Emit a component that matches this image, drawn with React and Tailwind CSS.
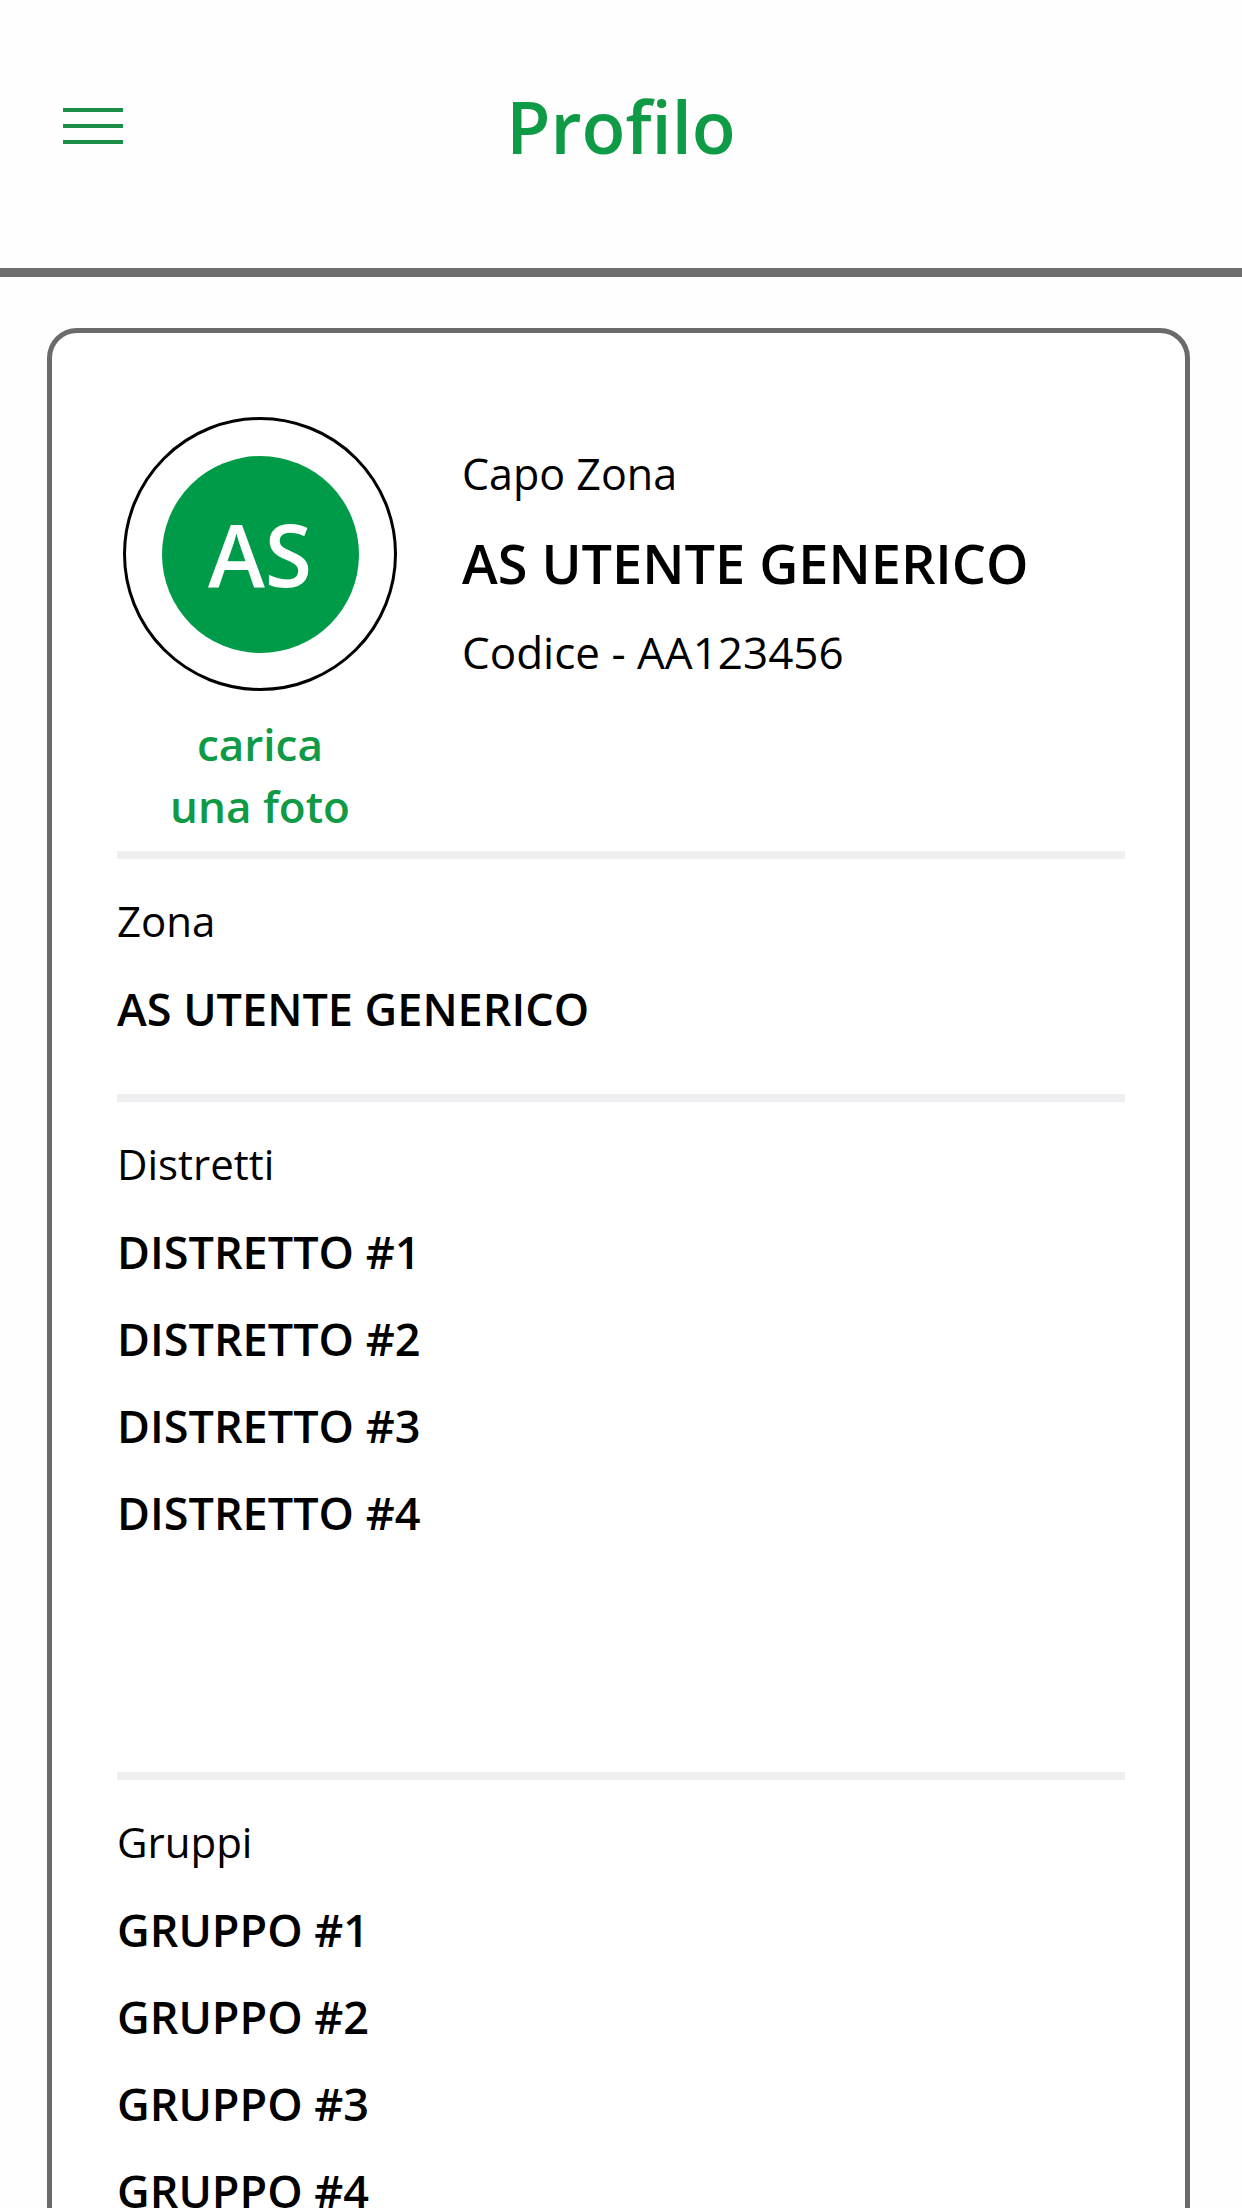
import React from 'react';

const zona = ['AS UTENTE GENERICO'];
const distretti = ['DISTRETTO #1', 'DISTRETTO #2', 'DISTRETTO #3', 'DISTRETTO #4'];
const gruppi = ['GRUPPO #1', 'GRUPPO #2', 'GRUPPO #3', 'GRUPPO #4'];

const Section = ({ label, items, bottom }) => (
  <>
    <div className="h-[8px] bg-[#efeff1]" />
    <div className={`pt-[18px] ${bottom}`}>
      <p className="text-[42px] leading-[88px] text-black">{label}</p>
      {items.map((item, index) => (
        <p key={index} className="text-[45px] leading-[87px] font-semibold text-black">
          {item}
        </p>
      ))}
    </div>
  </>
);

const App = () => {
  return (
    <div className="min-h-screen bg-[#fefefe] font-['Open_Sans',sans-serif] overflow-hidden">
      {/* Header */}
      <header className="h-[268px] pt-[86px] px-[63px]">
        <div className="grid grid-cols-[1fr_auto_1fr] items-center h-[80px]">
          <div className="flex flex-col gap-[12px] w-[60px]">
            <span className="block h-[4px] bg-[#1b8d46]" />
            <span className="block h-[4px] bg-[#1b8d46]" />
            <span className="block h-[4px] bg-[#1b8d46]" />
          </div>
          <h1 className="text-[72px] leading-[80px] font-semibold text-[#0f9a45]">Profilo</h1>
          <div />
        </div>
      </header>
      <div className="h-[9px] bg-[#6e6e70]" />

      {/* Card */}
      <div className="mt-[51px] ml-[47px] w-[1143px] border-[5px] border-[#6b6b6b] rounded-[30px] bg-white pl-[65px] pr-[60px] min-h-[2000px]">
        {/* Top row */}
        <div className="flex pt-[84px] pb-[14px]">
          <div className="w-[286px] flex flex-col items-center">
            <div className="w-[274px] h-[274px] rounded-full border-[3px] border-black flex items-center justify-center">
              <div className="w-[197px] h-[197px] rounded-full bg-[#009b48] flex items-center justify-center">
                <span className="text-[86px] leading-none font-semibold text-white">AS</span>
              </div>
            </div>
            <p className="mt-[22px] text-center text-[44px] leading-[62px] font-semibold text-[#0f9a45]">
              carica
              <br />
              una foto
            </p>
          </div>
          <div className="ml-[59px] pt-[27px]">
            <p className="text-[43px] leading-[60px] text-black">Capo Zona</p>
            <p className="mt-[19px] text-[54px] leading-[80px] font-semibold text-black">AS UTENTE GENERICO</p>
            <p className="mt-[19px] text-[44px] leading-[60px] text-black">Codice - AA123456</p>
          </div>
        </div>

        <Section label="Zona" items={zona} bottom="pb-[42px]" />
        <Section label="Distretti" items={distretti} bottom="pb-[216px]" />
        <Section label="Gruppi" items={gruppi} bottom="pb-[40px]" />
      </div>
    </div>
  );
};

export default App;
